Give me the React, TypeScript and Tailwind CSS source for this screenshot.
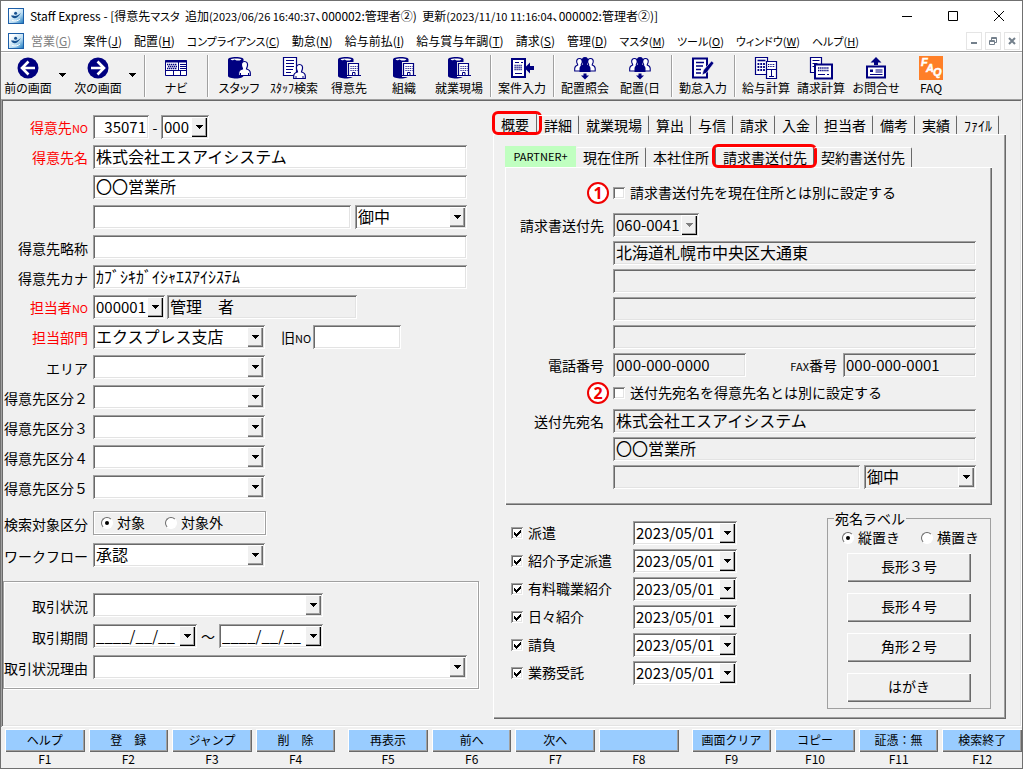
import React, { useState } from "react";
import clsx from "clsx";

const SUNKEN =
  "shadow-[inset_1px_1px_0_#a0a0a0,inset_-1px_-1px_0_#ffffff,inset_2px_2px_0_#696969,inset_-2px_-2px_0_#e3e3e3]";
const RAISED =
  "shadow-[inset_1px_1px_0_#ffffff,inset_-1px_-1px_0_#696969,inset_-2px_-2px_0_#a0a0a0]";
const ETCHED = "shadow-[inset_0_0_0_1px_#a0a0a0,inset_0_0_0_2px_#ffffff,1px_1px_0_#ffffff]";

const NAVY = "#000080";

/* ---------- icons ---------- */

const AppLogo = () => (
  <svg width="16" height="16" viewBox="0 0 16 16" aria-hidden="true">
    <defs>
      <linearGradient id="logo" x1="0" y1="0" x2="1" y2="1">
        <stop offset="0.2" stopColor="#ffffff" />
        <stop offset="0.6" stopColor="#b9dcf2" />
        <stop offset="1" stopColor="#1273bb" />
      </linearGradient>
    </defs>
    <rect x="0.5" y="0.5" width="15" height="15" fill="url(#logo)" stroke="#1d5fa8" />
    <path d="M3 7.5 C5 11.5 9 11.5 13 5 C10 7.6 7 8.6 5.4 7.6 Z" fill="#17508f" />
    <circle cx="7.6" cy="5.2" r="1.5" fill="#17508f" />
    <path d="M4 12.5 C7 13.5 10 13 12 11" stroke="#ffffff" fill="none" />
  </svg>
);

const ArrowIcon = ({ right }: { right?: boolean }) => (
  <>
    <circle cx="12" cy="12" r="10.5" fill={NAVY} />
    <path
      d={right ? "M5 12H17.5M11.5 5.5L18 12L11.5 18.5" : "M19 12H6.5M12.5 5.5L6 12L12.5 18.5"}
      fill="none"
      stroke="#fff"
      strokeWidth="2.6"
    />
  </>
);

const NaviIcon = () => (
  <>
    <path d="M1.5 4.5h21v15h-21z" fill="#fff" stroke={NAVY} />
    <path d="M1 5.5h22" stroke={NAVY} strokeWidth="2" />
    <path d="M1 14.5h22M14.5 6v8M9.5 15v5M16.5 15v5" stroke={NAVY} />
    <path d="M3 8.5h10M4 10.5h9M3 12.500h10" stroke={NAVY} strokeWidth="1.6" strokeDasharray="1.4 0.6" />
    <path d="M16 8.5h6M16 10.5h6M16 12.5h6" stroke={NAVY} />
  </>
);

const Cylinder = () => (
  <>
    <path d="M1 3.500C1 2 4 1 9 1S16.500 2 16.500 3.500V19.500C16.500 21.500 13 22.500 9 22.500S1 21.500 1 20Z" fill={NAVY} />
    <path d="M3.500 3.500C5 2.200 13 2.200 14.500 3.500C13 4.800 11 4.600 9.500 4.600L7.500 3.400L6 4.300C5 4.200 4 4 3.500 3.500Z" fill="#fff" />
  </>
);

const PersonShape = () => (
  <path
    d="M17.500 5.500C20 5.500 20.800 7.500 20.500 9.500C20.200 11.500 19.500 12 19.500 13C21.500 13.500 23.300 14.500 23.300 17V19.500H11.700V17C11.700 14.500 13.500 13.500 15.500 13C15.500 12 14.800 11.500 14.500 9.500C14.200 7.500 15 5.500 17.500 5.500Z"
    fill="#fff"
    stroke={NAVY}
    strokeWidth="1.200"
  />
);

const StaffIcon = () => (
  <>
    <Cylinder />
    <PersonShape />
    <path d="M13.500 19v-2M21.500 19v-2" stroke={NAVY} />
  </>
);

const StaffSearchIcon = () => (
  <>
    <path d="M1.500 1.500h13v18h-13z" fill="#fff" stroke={NAVY} strokeWidth="1.200" />
    <path d="M4 4.500h8M4 7.500h8M4 10.500h8M4 13.500h7M4 16.500h5" stroke={NAVY} />
    <g transform="translate(0 3)">
      <PersonShape />
      <path d="M14 19v-2M21 19v-2" stroke={NAVY} />
    </g>
  </>
);

const BuildingIcon = () => (
  <>
    <Cylinder />
    <path d="M10 6h14v15h-14z" fill="#f0f0f0" />
    <path d="M11.500 7.500h10v12h-10z" fill="#fff" stroke={NAVY} strokeWidth="1.200" />
    <path d="M13.500 10.500h7M13.500 12.500h7M13.500 14.500h7" stroke={NAVY} strokeWidth="1.100" strokeDasharray="1.100 1" />
    <path d="M15.500 19.500v-3h2.500v3" fill="#fff" stroke={NAVY} />
    <path d="M9 19.500h15" stroke={NAVY} />
  </>
);

const CaseIcon = () => (
  <>
    <path d="M2 3h13v18h-13z" fill="#fff" stroke={NAVY} strokeWidth="2" />
    <path d="M5 6.500h4M11 6.500h2M5 17.500h7" stroke={NAVY} />
    <path d="M4.500 9.500h8M4.500 11.500h8M4.500 13.500h8" stroke={NAVY} strokeWidth="1.300" strokeDasharray="1.200 0.800" />
    <path d="M14.500 12L20 6.500V10H24V14H20V17.500Z" fill={NAVY} />
  </>
);

const PeopleIcon = () => (
  <>
    <g fill="#fff" stroke={NAVY} strokeWidth="1.100">
      <path d="M6.500 2.500c2.200 0 3 1.800 2.700 3.500s-1 2-1 3c1.500.5 3 1.500 3 3.500v2.500H1.700v-2.500c0-2 1.500-3 3-3.500c0-1-.7-1.300-1-3S4.300 2.500 6.500 2.500Z" />
      <path d="M17.500 2.500c2.200 0 3 1.800 2.700 3.500s-1 2-1 3c1.500.5 3 1.500 3 3.500v2.500H12.700v-2.500c0-2 1.500-3 3-3.500c0-1-.7-1.300-1-3S15.300 2.500 17.500 2.500Z" />
    </g>
    <path d="M12 1c2.500 0 3.500 2 3.200 4s-1.200 2.500-1.200 3.500c2 .5 3.500 2 3.500 4v3.500h-11v-3.500c0-2 1.500-3.500 3.500-4c0-1-.9-1.500-1.200-3.500S9.500 1 12 1Z" fill={NAVY} />
    <path d="M10.500 17.500h3v2H16L12 23.500L8 19.500h2.500Z" fill={NAVY} />
  </>
);

const AttendIcon = () => (
  <>
    <path d="M2 2.500h14v19h-14z" fill="#fff" stroke={NAVY} strokeWidth="2" />
    <path d="M5 6.500h8M5 10h7M5 13.500h5M5 17h5" stroke={NAVY} strokeWidth="1.600" />
    <path d="M23 7L20.500 5L12.500 14L11 19L15.500 17Z" fill={NAVY} stroke="#fff" strokeWidth="0.600" />
  </>
);

const CalcIcon = () => (
  <>
    <path d="M1.500 1.500h12v17h-12z" fill="#fff" stroke={NAVY} strokeWidth="1.200" />
    <path d="M3.500 4.500h8" stroke={NAVY} strokeWidth="1.600" />
    <path d="M3.500 8h8M3.500 11h8M3.500 14h8" stroke={NAVY} strokeWidth="1.800" strokeDasharray="1.800 1" />
    <path d="M12.500 5.500h10v17h-10z" fill="#fff" stroke={NAVY} strokeWidth="1.200" />
    <path d="M14 8.500h7M14 10.500h7" stroke={NAVY} strokeDasharray="1 0.700" />
    <path d="M12 13.500h11M17.500 13.500v7M15 20.500h5" stroke={NAVY} />
  </>
);

const BillIcon = () => (
  <>
    <path d="M1.500 1.500h11v15h-11z" fill="#fff" stroke={NAVY} strokeWidth="1.200" />
    <path d="M3.500 4.500h7M3.500 7.500h5M3.500 10.500h2" stroke={NAVY} />
    <path d="M6 8.500h17v14h-17z" fill="#fff" stroke={NAVY} strokeWidth="2" />
    <path d="M9 12h11M9 14.500h11" stroke={NAVY} strokeWidth="1.600" strokeDasharray="1.400 0.700" />
    <path d="M9 18.500h7M18 18.500h2" stroke={NAVY} />
  </>
);

const AskIcon = () => (
  <>
    <path d="M12 1L17.500 6.500H14V9H10V6.500H6.500Z" fill={NAVY} />
    <path d="M3 10.500h18v11h-18z" fill="#fff" stroke={NAVY} strokeWidth="2" />
    <path d="M6 13.500h3v2.500h-3z" fill={NAVY} />
    <path d="M11.500 14h7M11.500 16h7M6 18.500h12.500" stroke={NAVY} />
  </>
);

const FaqIcon = () => (
  <>
    <rect width="24" height="24" fill="#ff7f27" />
    <g fill="#fff" stroke="#fff" strokeWidth="0.500" fontFamily="Liberation Sans, sans-serif" fontWeight="700" fontStyle="italic" fontSize="11">
      <text x="2" y="10">F</text>
      <text x="7" y="15.500">A</text>
      <text x="14" y="20">Q</text>
    </g>
  </>
);

/* ---------- data ---------- */

type Menu = { label: string; mnemonic: string; kana?: boolean };

const MENUS: Menu[] = [
  { label: "営業", mnemonic: "G" },
  { label: "案件", mnemonic: "J" },
  { label: "配置", mnemonic: "H" },
  { label: "コンプライアンス", mnemonic: "C", kana: true },
  { label: "勤怠", mnemonic: "N" },
  { label: "給与前払", mnemonic: "I" },
  { label: "給与賞与年調", mnemonic: "T" },
  { label: "請求", mnemonic: "S" },
  { label: "管理", mnemonic: "D" },
  { label: "マスタ", mnemonic: "M", kana: true },
  { label: "ツール", mnemonic: "O", kana: true },
  { label: "ウィンドウ", mnemonic: "W", kana: true },
  { label: "ヘルプ", mnemonic: "H", kana: true },
];

type Tool = { label: string; icon: React.ReactNode; caret?: boolean };

const TOOL_GROUPS: Tool[][] = [
  [
    { label: "前の画面", icon: <ArrowIcon />, caret: true },
    { label: "次の画面", icon: <ArrowIcon right />, caret: true },
  ],
  [{ label: "ナビ", icon: <NaviIcon /> }],
  [
    { label: "スタッフ", icon: <StaffIcon /> },
    { label: "ｽﾀｯﾌ検索", icon: <StaffSearchIcon /> },
    { label: "得意先", icon: <BuildingIcon /> },
    { label: "組織", icon: <BuildingIcon /> },
    { label: "就業現場", icon: <BuildingIcon /> },
  ],
  [{ label: "案件入力", icon: <CaseIcon /> }],
  [
    { label: "配置照会", icon: <PeopleIcon /> },
    { label: "配置(日", icon: <PeopleIcon /> },
  ],
  [{ label: "勤怠入力", icon: <AttendIcon /> }],
  [
    { label: "給与計算", icon: <CalcIcon /> },
    { label: "請求計算", icon: <BillIcon /> },
    { label: "お問合せ", icon: <AskIcon /> },
    { label: "FAQ", icon: <FaqIcon /> },
  ],
];

const MAIN_TABS = ["概要", "詳細", "就業現場", "算出", "与信", "請求", "入金", "担当者", "備考", "実績", "ﾌｧｲﾙ"];
const SUB_TABS = ["PARTNER+", "現在住所", "本社住所", "請求書送付先", "契約書送付先"];
const CONTRACTS = ["派遣", "紹介予定派遣", "有料職業紹介", "日々紹介", "請負", "業務受託"];
const LABEL_SIZES = ["長形３号", "長形４号", "角形２号", "はがき"];

const FUNCTION_KEYS = [
  ["ヘルプ", "登　録", "ジャンプ", "削　除"],
  ["再表示", "前へ", "次へ", ""],
  ["画面クリア", "コピー", "証憑：無", "検索終了"],
];

/* ---------- controls ---------- */

const Field = ({
  name,
  value = "",
  locked,
  className,
}: {
  name: string;
  value?: string;
  locked?: boolean;
  className?: string;
}) => (
  <input
    type="text"
    id={name}
    aria-label={name}
    defaultValue={value}
    readOnly={locked}
    className={clsx(
      "h-6 min-w-0 px-[3px] pb-0.5 leading-5 outline-none",
      locked ? "bg-[#f0f0f0]" : "bg-white",
      SUNKEN,
      className ?? "w-full text-base",
    )}
  />
);

const DropArrow = ({ muted }: { muted?: boolean }) => (
  <svg width="7" height="4" viewBox="0 0 7 4" shapeRendering="crispEdges" aria-hidden="true">
    <path d="M0 0H7L3.500 4Z" fill={muted ? "#808080" : "#000"} />
  </svg>
);

const DROP_BOX = "flex h-5 w-4 shrink-0 items-center justify-center bg-[#f0f0f0]";

// drop-down with a fixed list
const Combo = ({ name, value = "", gray, className }: { name: string; value?: string; gray?: boolean; className?: string }) => (
  <div className={clsx("relative h-6 p-0.5", gray ? "bg-[#f0f0f0]" : "bg-white", SUNKEN, className)}>
    <select
      id={name}
      aria-label={name}
      defaultValue={value}
      className="block h-5 w-full appearance-none pr-4 pb-0.5 pl-px text-base leading-[18px] outline-none"
    >
      <option>{value}</option>
    </select>
    <span className={clsx("pointer-events-none absolute top-0.5 right-0.5", DROP_BOX, RAISED)}>
      <DropArrow />
    </span>
  </div>
);

// typed value with a pop-up button
const Picker = ({
  name,
  value,
  muted,
  className,
}: {
  name: string;
  value: string;
  muted?: boolean;
  className?: string;
}) => (
  <div className={clsx("flex h-6 p-0.5", muted ? "bg-[#f0f0f0]" : "bg-white", SUNKEN, className)}>
    <input
      type="text"
      id={name}
      aria-label={name}
      defaultValue={value}
      className="h-5 w-full min-w-0 pb-0.5 pl-px text-[15px] leading-[18px] outline-none"
    />
    <button
      type="button"
      aria-label={`${name} 選択`}
      className={clsx(DROP_BOX, "shadow-[inset_1px_1px_0_#ffffff,inset_-1px_-1px_0_#000000,inset_-2px_-2px_0_#a0a0a0]")}
    >
      <DropArrow muted={muted} />
    </button>
  </div>
);

const Check = ({ label, checked, className }: { label: string; checked?: boolean; className?: string }) => (
  <label className={clsx("flex items-center gap-[5px]", className)}>
    <span className="relative size-3 shrink-0">
      <input type="checkbox" defaultChecked={checked} className={clsx("peer block size-3 appearance-none bg-white", SUNKEN)} />
      <svg
        viewBox="0 0 12 12"
        className="pointer-events-none absolute inset-0 hidden size-3 peer-checked:block"
        shapeRendering="crispEdges"
        aria-hidden="true"
      >
        <path d="M3 5V8L5 10L10 5V2L5 7Z" fill="#000" />
      </svg>
    </span>
    <span className="pb-0.5">{label}</span>
  </label>
);

const Radio = ({ group, label, checked }: { group: string; label: string; checked?: boolean }) => (
  <label className="flex items-center gap-1">
    <span className="relative size-3 shrink-0">
      <input
        type="radio"
        name={group}
        defaultChecked={checked}
        className="peer block size-3 appearance-none rounded-full border border-t-[#696969] border-r-white border-b-white border-l-[#696969] bg-white"
      />
      <span className="pointer-events-none absolute inset-0 m-auto hidden size-1 rounded-full bg-black peer-checked:block" />
    </span>
    <span className="pb-0.5">{label}</span>
  </label>
);

// label + field line of the left-hand form
const Row = ({
  label,
  htmlFor,
  required,
  children,
}: {
  label?: React.ReactNode;
  htmlFor?: string;
  required?: boolean;
  children: React.ReactNode;
}) => (
  <div className="flex h-6 items-center">
    <label
      htmlFor={htmlFor}
      className={clsx("w-[90px] shrink-0 pr-[5px] text-right whitespace-nowrap", required ? "text-[#ff0000]" : "pt-0.5")}
    >
      {label}
    </label>
    {children}
  </div>
);

const No = () => <span className="text-[11px]">NO</span>;

const SubRow = ({ label, htmlFor, children }: { label?: string; htmlFor?: string; children: React.ReactNode }) => (
  <div className="flex h-6 items-center">
    <label htmlFor={htmlFor} className="w-[108px] shrink-0 pr-[9px] text-right whitespace-nowrap">
      {label}
    </label>
    {children}
  </div>
);

const Marker = ({ n }: { n: number }) => (
  <div className="flex w-[108px] shrink-0 justify-end pr-1">
    <span className="flex size-[22px] items-center justify-center rounded-full border-2 border-[#f00000] bg-white font-['Noto_Sans',sans-serif] text-base leading-4 font-bold text-[#f00000]">
      {n}
    </span>
  </div>
);

/* ---------- sections ---------- */

const TitleBar = () => (
  <header className="bg-white">
    <div className="flex h-[29px] items-center pl-[7px]">
      <AppLogo />
      <h1 className="ml-1.5 text-[12px] whitespace-pre [font-feature-settings:'palt']">
        Staff Express - [得意先<span className="text-[11px]">マスタ</span>
        {"  "}追加<span className="text-[11px]">(2023/06/26 16:40:37</span>、000002:管理者②){"  "}更新
        <span className="text-[11px]">(2023/11/10 11:16:04</span>、000002:管理者②)]
      </h1>
      <div className="ml-auto flex">
        <button type="button" aria-label="最小化" className="flex h-7 w-[46px] items-center justify-center">
          <svg width="10" height="10" stroke="#000" fill="none">
            <path d="M0 5.500H10" />
          </svg>
        </button>
        <button type="button" aria-label="最大化" className="flex h-7 w-[46px] items-center justify-center">
          <svg width="10" height="10" stroke="#000" fill="none">
            <path d="M0.500 0.500H9.500V9.500H0.500Z" />
          </svg>
        </button>
        <button type="button" aria-label="閉じる" className="flex h-7 w-[46px] items-center justify-center">
          <svg width="10" height="10" stroke="#000" fill="none">
            <path d="M0 0L10 10M10 0L0 10" />
          </svg>
        </button>
      </div>
    </div>

    <nav className="flex h-[21px] items-center pl-[7px]">
      <AppLogo />
      <div className="ml-[7px] flex gap-3 leading-4 whitespace-nowrap [font-feature-settings:'palt']">
        {MENUS.map(({ label, mnemonic, kana }, i) => (
          <button
            type="button"
            key={label}
            disabled={i === 0}
            className={clsx(kana ? "text-[11px]" : "text-[12px]", i === 0 && "text-[#808080]")}
          >
            {label}(<span className="underline">{mnemonic}</span>)
          </button>
        ))}
      </div>
      <div className="ml-auto flex gap-[3px] pr-0.5 text-[#74808c]">
        <button type="button" aria-label="子画面を最小化" className="flex h-[18px] w-4 items-center justify-center border border-[#e5e5e5]">
          <svg width="8" height="8" stroke="currentColor" strokeWidth="2">
            <path d="M1 6H7" />
          </svg>
        </button>
        <button type="button" aria-label="子画面を元に戻す" className="flex h-[18px] w-4 items-center justify-center border border-[#e5e5e5]">
          <svg width="8" height="8" stroke="currentColor" fill="none">
            <path d="M2.500 3V0.500H7.500V5.500H5.500M0.500 3.500H5.500V7.500H0.500ZM0.500 4.500H5.500M2.500 1.500H7.500" />
          </svg>
        </button>
        <button type="button" aria-label="子画面を閉じる" className="flex h-[18px] w-4 items-center justify-center border border-[#e5e5e5]">
          <svg width="8" height="8" stroke="currentColor" strokeWidth="2">
            <path d="M1 1L7 7M7 1L1 7" />
          </svg>
        </button>
      </div>
    </nav>
  </header>
);

const Toolbar = () => (
  <div className="flex h-12 border-t border-[#a0a0a0] pt-1 shadow-[inset_0_1px_0_#ffffff]">
    {TOOL_GROUPS.map((group, g) => (
      <div key={g} className="flex">
        {g > 0 && <span className="mx-[3px] -mt-px mb-0.5 w-0.5 border-r border-l border-r-white border-l-[#a0a0a0]" />}
        {group.map((tool) => (
          <div key={tool.label} className="flex">
            <button type="button" className="flex w-[55px] flex-col items-center pr-px text-[12px] leading-4 whitespace-nowrap">
              <svg width="24" height="24" viewBox="0 0 24 24" className="shrink-0" aria-hidden="true">
                {tool.icon}
              </svg>
              <span className="[font-feature-settings:'palt']">{tool.label}</span>
            </button>
            {tool.caret && (
              <button type="button" aria-label={`${tool.label}の履歴`} className="flex w-[15px] items-center justify-center pr-0.5 pb-1.5">
                <DropArrow />
              </button>
            )}
          </div>
        ))}
      </div>
    ))}
  </div>
);

const CustomerForm = () => (
  <section className="pt-[14px]">
    <div className="flex flex-col gap-1.5 pr-[26px]">
      <Row label={<>得意先<No /></>} htmlFor="得意先NO" required>
        <Field name="得意先NO" value="35071" className="w-14 text-right text-[15px]" />
        <span className="w-3 text-center">-</span>
        <Picker name="得意先枝番" value="000" className="w-12" />
      </Row>
      <Row label="得意先名" htmlFor="得意先名" required>
        <Field name="得意先名" value="株式会社エスアイシステム" />
      </Row>
      <Row>
        <Field name="得意先名2" value="〇〇営業所" />
      </Row>
      <Row>
        <Field name="得意先名3" />
        <Combo name="敬称" value="御中" className="ml-1 w-28 shrink-0" />
      </Row>
      <Row label="得意先略称" htmlFor="得意先略称">
        <Field name="得意先略称" />
      </Row>
      <Row label="得意先カナ" htmlFor="得意先カナ">
        <Field name="得意先カナ" value="ｶﾌﾞｼｷｶﾞｲｼｬｴｽｱｲｼｽﾃﾑ" />
      </Row>
      <Row label={<>担当者<No /></>} htmlFor="担当者NO" required>
        <Picker name="担当者NO" value="000001" className="w-[72px]" />
        <Field name="担当者名" value="管理　者" locked className="ml-0.5 w-[190px] text-base" />
      </Row>
      <Row label="担当部門" htmlFor="担当部門" required>
        <Combo name="担当部門" value="エクスプレス支店" className="w-[172px]" />
        <label htmlFor="旧NO" className="ml-4 w-8 whitespace-nowrap">
          旧<No />
        </label>
        <Field name="旧NO" className="w-[88px] text-base" />
      </Row>
      {["エリア", "得意先区分２", "得意先区分３", "得意先区分４", "得意先区分５"].map((label) => (
        <Row key={label} label={label} htmlFor={label}>
          <Combo name={label} className="w-[172px]" />
        </Row>
      ))}
    </div>

    <div className="mt-3 flex flex-col gap-2">
      <Row label="検索対象区分">
        <div className={clsx("flex h-6 w-[173px] items-center gap-5 pl-2", ETCHED)}>
          <Radio group="target" label="対象" checked />
          <Radio group="target" label="対象外" />
        </div>
      </Row>
      <Row label="ワークフロー" htmlFor="ワークフロー">
        <Combo name="ワークフロー" value="承認" className="w-[172px]" />
      </Row>
    </div>

    <div className={clsx("mt-[14px] mr-[14px] flex flex-col gap-[7px] pt-3 pr-3 pb-[10px]", ETCHED)}>
      <Row label="取引状況" htmlFor="取引状況">
        <Combo name="取引状況" className="w-[230px]" />
      </Row>
      <Row label="取引期間" htmlFor="取引開始">
        <Picker name="取引開始" value="____/__/__" className="w-[104px]" />
        <span className="w-[22px] text-center">～</span>
        <Picker name="取引終了" value="____/__/__" className="w-[104px]" />
      </Row>
      <Row label="取引状況理由" htmlFor="取引状況理由">
        <Combo name="取引状況理由" className="w-full" />
      </Row>
    </div>
  </section>
);

const TAB =
  "relative flex items-center justify-center rounded-t-[2px] border-t border-r border-t-white border-r-[#696969] pb-px whitespace-nowrap";
const RED_MARK = "pointer-events-none absolute rounded-md border-3 border-[#ff0000]";

const BillingAddress = () => (
  <div className={clsx("flex flex-col gap-1 pt-[14px] pr-4 pb-4", RAISED)}>
    <div className="mb-1 flex h-6 items-center">
      <Marker n={1} />
      <Check label="請求書送付先を現在住所とは別に設定する" />
    </div>
    <SubRow label="請求書送付先" htmlFor="郵便番号">
      <Picker name="郵便番号" value="060-0041" muted className="w-[86px]" />
    </SubRow>
    <SubRow>
      <Field name="住所1" value="北海道札幌市中央区大通東" locked />
    </SubRow>
    {["住所2", "住所3", "住所4"].map((name) => (
      <SubRow key={name}>
        <Field name={name} locked />
      </SubRow>
    ))}
    <SubRow label="電話番号" htmlFor="電話番号">
      <Field name="電話番号" value="000-000-0000" locked className="w-[133px] text-[15px]" />
      <label htmlFor="FAX番号" className="ml-auto pr-1.5">
        <span className="text-[11px]">FAX</span>番号
      </label>
      <Field name="FAX番号" value="000-000-0001" locked className="w-[133px] text-[15px]" />
    </SubRow>
    <div className="flex h-6 items-center">
      <Marker n={2} />
      <Check label="送付先宛名を得意先名とは別に設定する" />
    </div>
    <SubRow label="送付先宛名" htmlFor="送付先宛名">
      <Field name="送付先宛名" value="株式会社エスアイシステム" locked />
    </SubRow>
    <SubRow>
      <Field name="送付先宛名2" value="〇〇営業所" locked />
    </SubRow>
    <SubRow>
      <Field name="送付先宛名3" locked />
      <Combo name="送付先敬称" value="御中" gray className="ml-1 w-28 shrink-0" />
    </SubRow>
  </div>
);

const Overview = () => {
  const [tab, setTab] = useState("概要");
  const [sub, setSub] = useState("請求書送付先");

  return (
    <section className="flex flex-col pt-3 pr-[14px] pb-1.5">
      <div role="tablist" className="flex h-[21px] items-end">
        {MAIN_TABS.map((name, i) => (
          <button
            type="button"
            role="tab"
            aria-selected={tab === name}
            key={name}
            onClick={() => setTab(name)}
            className={clsx(TAB, tab === name ? "h-[21px]" : "h-[19px]", i === 0 ? "w-11 border-l border-l-white" : "pr-1.5 pl-[7px]")}
          >
            {name}
            {tab === name && <span className={clsx(RED_MARK, "-top-[3px] -right-1.5 -bottom-px -left-0.5")} />}
          </button>
        ))}
      </div>

      <div className={clsx("flex flex-1 flex-col pt-3 pr-[14px] pb-[10px] pl-3", RAISED)}>
        <div role="tablist" className="flex h-[21px] items-end">
          {SUB_TABS.map((name, i) => (
            <button
              type="button"
              role="tab"
              aria-selected={sub === name}
              key={name}
              onClick={() => setSub(name)}
              className={clsx(i === 0 ? "h-[21px] w-[71px] bg-[#c0ffc0] pb-px text-[11px]" : clsx(TAB, "h-5 pr-1.5 pl-[7px]"))}
            >
              {name}
              {sub === name && <span className={clsx(RED_MARK, "-top-1 -right-1 -bottom-px -left-1")} />}
            </button>
          ))}
        </div>

        <BillingAddress />

        <div className="mt-1.5 flex justify-between">
          <div className="flex flex-col gap-1 pt-[10px] pl-1.5">
            {CONTRACTS.map((name) => (
              <div key={name} className="flex items-center">
                <Check label={name} checked className="w-[122px]" />
                <Picker name={`${name}開始日`} value="2023/05/01" className="w-[104px]" />
              </div>
            ))}
          </div>

          <fieldset className="mr-px w-[164px] border border-[#a0a0a0] pb-1.5">
            <legend className="ml-1.5 px-px leading-[14px]">宛名ラベル</legend>
            <div className="mt-1.5 flex h-[14px] items-center justify-between pr-[11px] pl-[14px]">
              <Radio group="direction" label="縦置き" checked />
              <Radio group="direction" label="横置き" />
            </div>
            <div className="mt-2 flex flex-col gap-[11px] px-[19px]">
              {LABEL_SIZES.map((name) => (
                <button type="button" key={name} className={clsx("h-[29px] pb-1", RAISED)}>
                  {name}
                </button>
              ))}
            </div>
          </fieldset>
        </div>
      </div>
    </section>
  );
};

const FunctionBar = () => (
  <footer className="flex gap-[13px] pt-0.5 pb-0.5 pl-1">
    {FUNCTION_KEYS.map((group, g) => (
      <div key={g} className="flex flex-1 gap-1">
        {group.map((label, i) => (
          <div key={i} className="flex min-w-0 flex-1 flex-col text-center">
            <button
              type="button"
              aria-label={label || "未使用"}
              className={clsx("h-[23px] bg-[#99ccff] pb-0.5 text-[12px] whitespace-nowrap", RAISED)}
            >
              {label}
            </button>
            <span className="text-[12px] leading-[14px]">F{g * 4 + i + 1}</span>
          </div>
        ))}
      </div>
    ))}
  </footer>
);

export default function App() {
  return (
    <div className="flex min-h-screen w-full flex-col overflow-hidden border border-[#707070] bg-[#f0f0f0] font-['Noto_Sans_CJK_JP',sans-serif] text-[14px] leading-5 text-black">
      <TitleBar />
      <Toolbar />
      <main className={clsx("grid flex-1 grid-cols-[490fr_527fr] p-0.5", SUNKEN)}>
        <CustomerForm />
        <Overview />
      </main>
      <FunctionBar />
    </div>
  );
}
